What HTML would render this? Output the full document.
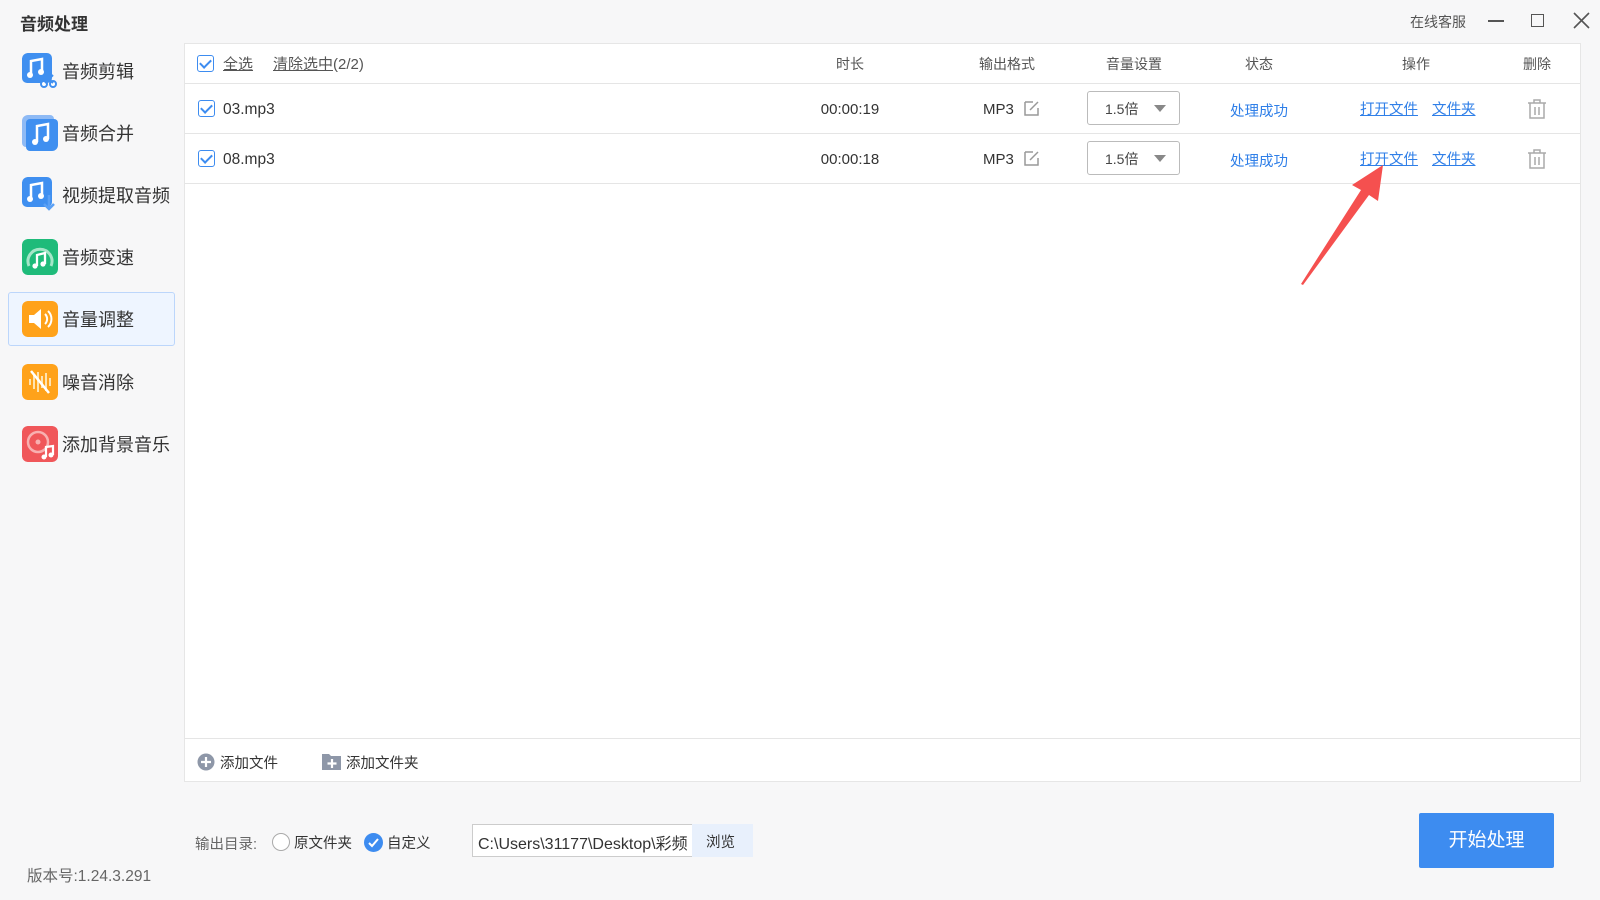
<!DOCTYPE html>
<html><head><meta charset="utf-8"><style>
*{margin:0;padding:0;box-sizing:border-box}
body{width:1600px;height:900px;background:#f7f7f8;font-family:"Liberation Sans","Noto Sans CJK SC",sans-serif;color:#333;position:relative;overflow:hidden}
.a{position:absolute;white-space:nowrap}
.title{left:20px;top:10px;font-size:17px;font-weight:bold;color:#333}
.side{left:8px;width:167px;height:54px}
.side .ic{position:absolute;left:14px;top:9px;width:36px;height:36px;border-radius:6px}
.side .t{position:absolute;left:54px;top:14px;font-size:18px;color:#333}
.act{background:#eef5ff;border:1.5px solid #bcd6fb;border-radius:3px}
.panel{left:184px;top:43px;width:1397px;height:739px;background:#fff;border:1px solid #e6e6e6}
.hl{left:185px;width:1395px;height:1px;background:#e5e5e5}
.hd{font-size:14px;color:#555;top:54px;transform:translateX(-50%)}
.cb{width:17px;height:17px;border:1.5px solid #3d8cf0;border-radius:3px;background:#fff}
.cb::after{content:"";position:absolute;left:4px;top:1px;width:5px;height:9px;border:solid #3d8cf0;border-width:0 2px 2px 0;transform:rotate(45deg)}
.c{transform:translateX(-50%);font-size:15px}
.link{color:#2f7fe8;text-decoration:underline;font-size:14.5px}
.sel{width:93px;height:34px;border:1.5px solid #bbb;border-radius:3px;font-size:14px;padding:7px 0 0 17px;color:#444}
.sel::after{content:"";position:absolute;right:13px;top:13px;border:6px solid transparent;border-top:7px solid #888}
</style></head><body>
<div class="a title">音频处理</div>
<div class="a" style="left:1410px;top:12px;font-size:14px;color:#555">在线客服</div>
<div class="a" style="left:1488px;top:20px;width:16px;height:1.5px;background:#555"></div>
<div class="a" style="left:1531px;top:14px;width:13px;height:13px;border:1.5px solid #555"></div>
<svg class="a" style="left:1573px;top:12px" width="17" height="17"><path d="M1 1L16 16M16 1L1 16" stroke="#555" stroke-width="1.6"/></svg>

<div class="a side" style="top:44px"><svg class="ic" viewBox="0 0 36 36"><rect x="0" y="0" width="30" height="30" rx="5" fill="#3f8ff0"/><path d="M9 22V8l11-2v13" stroke="#fff" stroke-width="2.5" fill="none"/><circle cx="8" cy="22" r="3" fill="#fff"/><circle cx="19" cy="19" r="3" fill="#fff"/><circle cx="22" cy="31" r="3" fill="#fff" stroke="#3f8ff0" stroke-width="2"/><circle cx="31" cy="31" r="3" fill="#fff" stroke="#3f8ff0" stroke-width="2"/><path d="M23 22l8 8M31 22l-8 8" stroke="#3f8ff0" stroke-width="2"/></svg><div class="t">音频剪辑</div></div>
<div class="a side" style="top:106px"><svg class="ic" viewBox="0 0 36 36"><rect x="0" y="0" width="32" height="32" rx="4" fill="#8ebaf5"/><rect x="4" y="4" width="32" height="32" rx="4" fill="#3f8ff0"/><path d="M15 27V11l11-2v15" stroke="#fff" stroke-width="2.5" fill="none"/><circle cx="13" cy="27" r="3" fill="#fff"/><circle cx="24" cy="24" r="3" fill="#fff"/></svg><div class="t">音频合并</div></div>
<div class="a side" style="top:168px"><svg class="ic" viewBox="0 0 36 36"><rect x="0" y="0" width="30" height="30" rx="5" fill="#3f8ff0"/><path d="M9 22V8l11-2v13" stroke="#fff" stroke-width="2.5" fill="none"/><circle cx="8" cy="22" r="3" fill="#fff"/><circle cx="19" cy="19" r="3" fill="#fff"/><path d="M27 18v14M22 27l5 5 5-5" stroke="#5aa0f5" stroke-width="2.5" fill="none"/></svg><div class="t">视频提取音频</div></div>
<div class="a side" style="top:230px"><svg class="ic" viewBox="0 0 36 36"><rect width="36" height="36" rx="5" fill="#1fbb7a"/><path d="M7 27A12 12 0 1 1 29 27" stroke="#a5e6c8" stroke-width="3" fill="none"/><path d="M15 27V16l8-2v11" stroke="#fff" stroke-width="2.3" fill="none"/><circle cx="13" cy="27" r="2.6" fill="#fff"/><circle cx="21" cy="25" r="2.6" fill="#fff"/></svg><div class="t">音频变速</div></div>
<div class="a side act" style="top:292px"><svg class="ic" viewBox="0 0 36 36" style="left:13px;top:8px"><rect width="36" height="36" rx="5" fill="#ffa21a"/><path d="M7 14h5l7-6v20l-7-6H7z" fill="#fff"/><path d="M23 13a7 7 0 0 1 0 10M26 10a11 11 0 0 1 0 16" stroke="#fff" stroke-width="2" fill="none"/></svg><div class="t" style="left:53px;top:13px">音量调整</div></div>
<div class="a side" style="top:355px"><svg class="ic" viewBox="0 0 36 36"><rect width="36" height="36" rx="5" fill="#ffa21a"/><path d="M8 15v6M12 11v14M16 8v20M20 12v12M24 9v18M28 14v8" stroke="#ffe3b0" stroke-width="2"/><path d="M9 7l18 22" stroke="#fff" stroke-width="2.5"/></svg><div class="t">噪音消除</div></div>
<div class="a side" style="top:417px"><svg class="ic" viewBox="0 0 36 36"><rect width="36" height="36" rx="5" fill="#f0575a"/><circle cx="16" cy="16" r="10" stroke="#f8b0b0" stroke-width="2.5" fill="none"/><circle cx="16" cy="16" r="2.5" fill="#f8b0b0"/><path d="M24 31V21l7-1v9" stroke="#fff" stroke-width="2.2" fill="none"/><circle cx="22" cy="31" r="2.5" fill="#fff"/><circle cx="29" cy="29" r="2.5" fill="#fff"/></svg><div class="t">添加背景音乐</div></div>

<div class="a panel"></div>
<div class="a hl" style="top:83px"></div>
<div class="a hl" style="top:133px"></div>
<div class="a hl" style="top:183px"></div>
<div class="a hl" style="top:738px"></div>

<div class="a cb" style="left:197px;top:55px"></div>
<div class="a" style="left:223px;top:53px;font-size:15px;color:#555;text-decoration:underline">全选</div>
<div class="a" style="left:273px;top:53px;font-size:15px;color:#555"><u>清除选中</u>(2/2)</div>
<div class="a hd" style="left:850px">时长</div>
<div class="a hd" style="left:1007px">输出格式</div>
<div class="a hd" style="left:1134px">音量设置</div>
<div class="a hd" style="left:1259px">状态</div>
<div class="a hd" style="left:1416px">操作</div>
<div class="a hd" style="left:1537px">删除</div>

<div class="a cb" style="left:198px;top:100px"></div>
<div class="a" style="left:223px;top:101px;font-size:15.5px">03.mp3</div>
<div class="a c" style="left:850px;top:101px">00:00:19</div>
<div class="a" style="left:983px;top:101px;font-size:15px">MP3</div>
<svg class="a" style="left:1024px;top:100px" width="16" height="16"><path d="M1 2h8M1 2v13h13V8" stroke="#999" stroke-width="1.5" fill="none"/><path d="M6 10L14 2" stroke="#999" stroke-width="1.5"/></svg>
<div class="a sel" style="left:1087px;top:91px">1.5倍</div>
<div class="a c" style="left:1259px;top:100px;color:#2f7fe8;font-size:14.5px">处理成功</div>
<div class="a link" style="left:1360px;top:98px">打开文件</div>
<div class="a link" style="left:1432px;top:98px">文件夹</div>
<svg class="a" style="left:1527px;top:99px" width="20" height="20"><path d="M1 4h18M7 4V1h6v3M3 4v15h14V4M8 8v8M12 8v8" stroke="#aaa" stroke-width="1.5" fill="none"/></svg>

<div class="a cb" style="left:198px;top:150px"></div>
<div class="a" style="left:223px;top:151px;font-size:15.5px">08.mp3</div>
<div class="a c" style="left:850px;top:151px">00:00:18</div>
<div class="a" style="left:983px;top:151px;font-size:15px">MP3</div>
<svg class="a" style="left:1024px;top:150px" width="16" height="16"><path d="M1 2h8M1 2v13h13V8" stroke="#999" stroke-width="1.5" fill="none"/><path d="M6 10L14 2" stroke="#999" stroke-width="1.5"/></svg>
<div class="a sel" style="left:1087px;top:141px">1.5倍</div>
<div class="a c" style="left:1259px;top:150px;color:#2f7fe8;font-size:14.5px">处理成功</div>
<div class="a link" style="left:1360px;top:148px">打开文件</div>
<div class="a link" style="left:1432px;top:148px">文件夹</div>
<svg class="a" style="left:1527px;top:149px" width="20" height="20"><path d="M1 4h18M7 4V1h6v3M3 4v15h14V4M8 8v8M12 8v8" stroke="#aaa" stroke-width="1.5" fill="none"/></svg>

<svg class="a" style="left:0;top:0" width="1600" height="900"><path d="M1301 284L1361 190L1352 185L1383 165L1378 201L1369 195L1303 285Z" fill="#f5504f"/></svg>

<svg class="a" style="left:197px;top:753px" width="18" height="18"><circle cx="9" cy="9" r="8.5" fill="#8e97a8"/><path d="M9 4v10M4 9h10" stroke="#fff" stroke-width="2.2"/></svg>
<div class="a" style="left:220px;top:752px;font-size:14.5px">添加文件</div>
<svg class="a" style="left:322px;top:752px" width="19" height="18"><path d="M0 2h7l2 2h10v14H0z" fill="#8e97a8"/><path d="M10 7v9M5.5 11.5h9" stroke="#fff" stroke-width="2.2"/></svg>
<div class="a" style="left:346px;top:752px;font-size:14.5px">添加文件夹</div>

<div class="a" style="left:195px;top:833px;font-size:14.5px;color:#666">输出目录:</div>
<div class="a" style="left:272px;top:833px;width:18px;height:18px;border:1.5px solid #aaa;border-radius:50%;background:#fff"></div>
<div class="a" style="left:294px;top:832px;font-size:14.5px">原文件夹</div>
<svg class="a" style="left:364px;top:833px" width="19" height="19"><circle cx="9.5" cy="9.5" r="9.5" fill="#3d8cf0"/><path d="M5 10l3 3 6-7" stroke="#fff" stroke-width="2" fill="none"/></svg>
<div class="a" style="left:387px;top:832px;font-size:14.5px">自定义</div>
<div class="a" style="left:472px;top:824px;width:221px;height:33px;border:1px solid #ccc;background:#fff;font-size:16px;padding:5px 0 0 5px;overflow:hidden">C:\Users\31177\Desktop\彩频</div>
<div class="a" style="left:692px;top:824px;width:61px;height:33px;background:#e8f0fc;font-size:14.5px;padding:7px 0 0 14px">浏览</div>
<div class="a" style="left:1419px;top:813px;width:135px;height:55px;background:#3d8cf0;border-radius:2px;color:#fff;font-size:19px;text-align:center;line-height:55px">开始处理</div>
<div class="a" style="left:27px;top:864px;font-size:15.5px;color:#666">版本号:1.24.3.291</div>
</body></html>
